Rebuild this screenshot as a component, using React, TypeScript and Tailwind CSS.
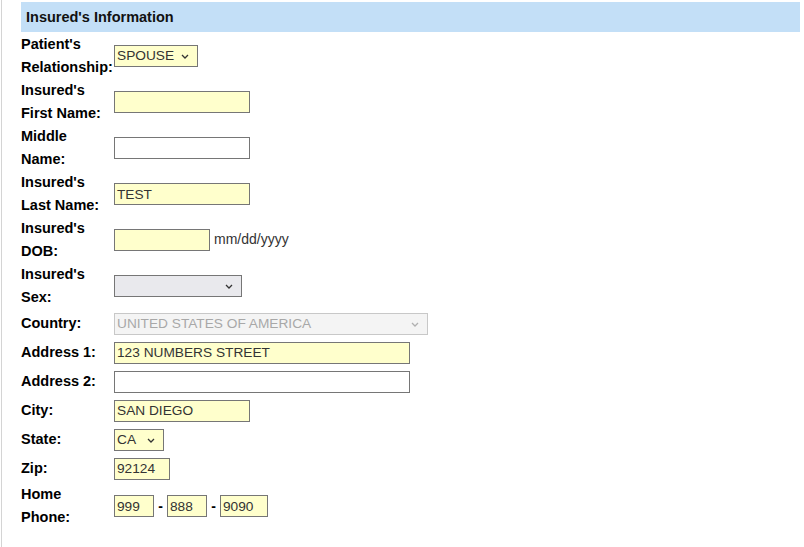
import React from "react";

const Chevron = ({ color = "#333" }: { color?: string }) => (
  <svg width="8" height="5" viewBox="0 0 8 5" className="shrink-0">
    <path d="M1 1 L4 4 L7 1" fill="none" stroke={color} strokeWidth="1.3" />
  </svg>
);

const Field = ({ w, value = "", white = false }: { w: string; value?: string; white?: boolean }) => (
  <div
    className={`${w} h-[22px] border border-[#767676] ${white ? "bg-white" : "bg-[#ffffcc]"} px-[2px] pt-[1px] flex items-center text-[13.7px] text-[#333] leading-none whitespace-nowrap overflow-hidden`}
  >
    {value}
  </div>
);

const Label2 = ({ a, b }: { a: string; b: string }) => (
  <div className="w-[93px] shrink-0 font-bold text-[14.5px] leading-[23px] text-black whitespace-nowrap">
    <div>{a}</div>
    <div>{b}</div>
  </div>
);

const Label1 = ({ t }: { t: string }) => (
  <div className="w-[93px] shrink-0 font-bold text-[14.5px] leading-[23px] text-black whitespace-nowrap">{t}</div>
);

export default function App() {
  return (
    <div
      className="w-[804px] h-[547px] bg-white overflow-hidden"
      style={{ fontFamily: '"Liberation Sans", Arial, sans-serif' }}
    >
      <div className="ml-[1px] h-full border-l border-[#d4d4d4] pl-[19px] pr-[4px] pt-[2px]">
        <div className="h-[30px] bg-[#c3dff7] pl-[5px] pt-[2px] flex items-center font-bold text-[14.5px] text-[#111]">
          Insured's Information
        </div>

        <div className="flex flex-col mt-[1px]">
          <div className="h-[46px] flex items-center">
            <Label2 a="Patient's" b="Relationship:" />
            <div className="w-[84px] h-[22px] border border-[#767676] bg-[#ffffcc] pl-[2px] pr-[8px] pt-[1px] flex items-center justify-between text-[13.7px] text-[#333]">
              <span>SPOUSE</span>
              <Chevron />
            </div>
          </div>

          <div className="h-[46px] flex items-center">
            <Label2 a="Insured's" b="First Name:" />
            <Field w="w-[136px]" />
          </div>

          <div className="h-[46px] flex items-center">
            <Label2 a="Middle" b="Name:" />
            <Field w="w-[136px]" white />
          </div>

          <div className="h-[46px] flex items-center">
            <Label2 a="Insured's" b="Last Name:" />
            <Field w="w-[136px]" value="TEST" />
          </div>

          <div className="h-[46px] flex items-center">
            <Label2 a="Insured's" b="DOB:" />
            <Field w="w-[96px]" />
            <span className="ml-[4px] text-[14px] text-[#333] -mt-[2px]">mm/dd/yyyy</span>
          </div>

          <div className="h-[46px] flex items-center">
            <Label2 a="Insured's" b="Sex:" />
            <div className="w-[128px] h-[22px] border border-[#767676] bg-[#e9e9ed] pl-[2px] pr-[8px] flex items-center justify-end">
              <Chevron />
            </div>
          </div>

          <div className="h-[29px] flex items-center">
            <Label1 t="Country:" />
            <div className="w-[314px] h-[22px] border border-[#c8c8c8] bg-[#f4f4f4] pl-[2px] pr-[8px] pt-[1px] flex items-center justify-between text-[13.7px] text-[#a8a8a8]">
              <span>UNITED STATES OF AMERICA</span>
              <Chevron color="#b0b0b0" />
            </div>
          </div>

          <div className="h-[29px] flex items-center">
            <Label1 t="Address 1:" />
            <Field w="w-[296px]" value="123 NUMBERS STREET" />
          </div>

          <div className="h-[29px] flex items-center">
            <Label1 t="Address 2:" />
            <Field w="w-[296px]" white />
          </div>

          <div className="h-[29px] flex items-center">
            <Label1 t="City:" />
            <Field w="w-[136px]" value="SAN DIEGO" />
          </div>

          <div className="h-[29px] flex items-center">
            <Label1 t="State:" />
            <div className="w-[50px] h-[22px] border border-[#767676] bg-[#ffffcc] pl-[2px] pr-[8px] pt-[1px] flex items-center justify-between text-[13.7px] text-[#333]">
              <span>CA</span>
              <Chevron />
            </div>
          </div>

          <div className="h-[29px] flex items-center">
            <Label1 t="Zip:" />
            <Field w="w-[56px]" value="92124" />
          </div>

          <div className="h-[46px] flex items-center">
            <Label2 a="Home" b="Phone:" />
            <Field w="w-[40px]" value="999" />
            <span className="w-[13px] text-center font-bold text-[14px] text-black">-</span>
            <Field w="w-[40px]" value="888" />
            <span className="w-[13px] text-center font-bold text-[14px] text-black">-</span>
            <Field w="w-[48px]" value="9090" />
          </div>
        </div>
      </div>
    </div>
  );
}
